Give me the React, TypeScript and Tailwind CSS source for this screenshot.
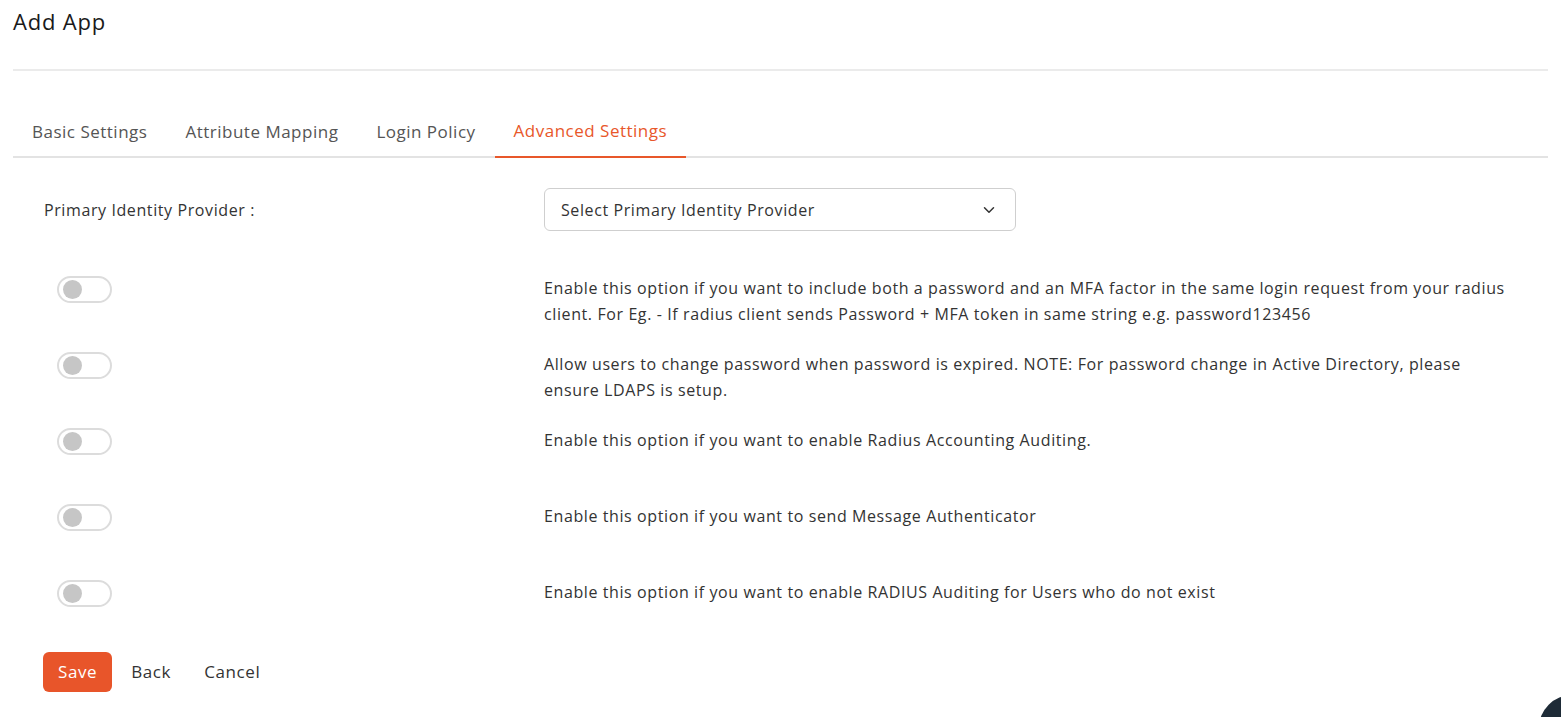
import { ChevronDown } from "lucide-react";

const rows = [
  "Enable this option if you want to include both a password and an MFA factor in the same login request from your radius client. For Eg. - If radius client sends Password + MFA token in same string e.g. password123456",
  "Allow users to change password when password is expired. NOTE: For password change in Active Directory, please ensure LDAPS is setup.",
  "Enable this option if you want to enable Radius Accounting Auditing.",
  "Enable this option if you want to send Message Authenticator",
  "Enable this option if you want to enable RADIUS Auditing for Users who do not exist",
];

const tabs = ["Basic Settings", "Attribute Mapping", "Login Policy", "Advanced Settings"];

function Toggle() {
  return (
    <div className="flex h-[27px] w-[55px] items-center rounded-full border-2 border-[#dcdcdc] bg-white px-[4px]">
      <div className="h-[19px] w-[19px] rounded-full bg-[#c6c6c6]" />
    </div>
  );
}

export default function App() {
  return (
    <div className="relative h-[717px] overflow-hidden bg-white px-[13px] font-['Open_Sans',sans-serif] tracking-[0.6px] text-[#333]">
      <div className="flex h-[71px] items-start border-b-2 border-[#ebebeb] pt-[5px]">
        <h1 className="text-[22px] tracking-[0.8px] text-[#1a1a1a]">Add App</h1>
      </div>

      <div className="mt-[39px] flex border-b-2 border-[#e3e3e3]">
        {tabs.map((t, i) => (
          <div
            key={t}
            className={`-mb-[2px] flex h-[48px] items-center px-[19px] pb-[4px] text-[17px] tracking-[0.5px] ${
              i === 3
                ? "border-b-2 border-[#e8572a] text-[#e8572a]"
                : "text-[#555]"
            }`}
          >
            {t}
          </div>
        ))}
      </div>

      <div className="mt-[30px] flex items-center">
        <div className="w-[531px] pl-[31px] text-[16px] text-[#333]">Primary Identity Provider :</div>
        <div className="flex h-[43px] w-[472px] items-center justify-between rounded-[6px] border border-[#cfcfcf] px-[16px] text-[16px] text-[#333]">
          <span>Select Primary Identity Provider</span>
          <ChevronDown className="mr-[1px] h-[18px] w-[18px] text-[#333]" strokeWidth={2} />
        </div>
      </div>

      <div className="mt-[44px] flex flex-col">
        {rows.map((r) => (
          <div key={r} className="flex h-[76px] items-start">
            <div className="w-[531px] pl-[44px] pt-[1px]">
              <Toggle />
            </div>
            <p className="max-w-[975px] text-[16px] leading-[26px] text-[#333]">{r}</p>
          </div>
        ))}
      </div>

      <div className="mt-[-3px] flex items-center pl-[30px]">
        <button className="h-[40px] rounded-[6px] bg-[#e8552a] px-[15px] text-[17px] tracking-[0.6px] text-white">Save</button>
        <button className="ml-[19px] text-[17px] tracking-[0.6px] text-[#333]">Back</button>
        <button className="ml-[33px] text-[17px] tracking-[0.6px] text-[#333]">Cancel</button>
      </div>

      <div className="absolute bottom-[-44px] right-[-44px] h-[66px] w-[66px] rounded-full bg-[#1e2b37]" />
    </div>
  );
}
